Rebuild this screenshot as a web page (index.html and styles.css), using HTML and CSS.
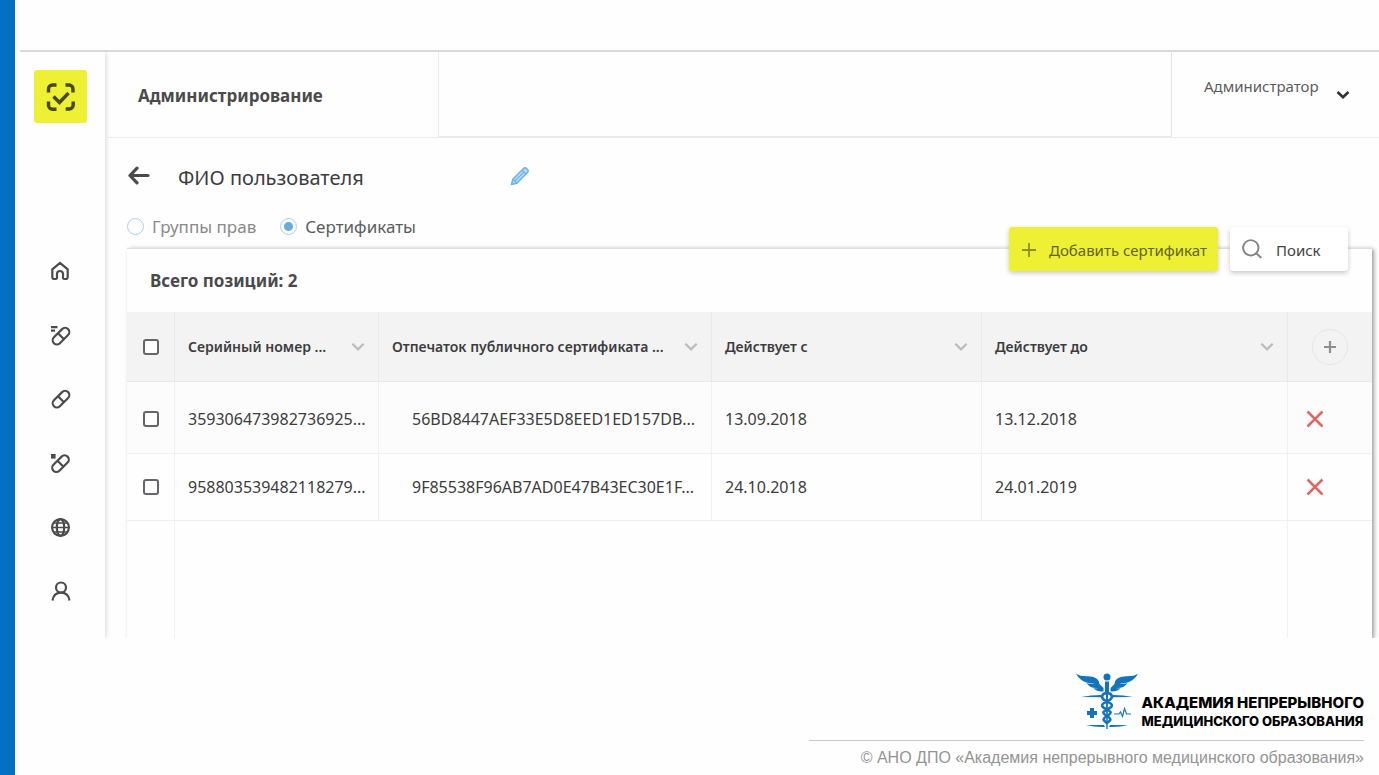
FILE: index.html
```html
<!DOCTYPE html>
<html lang="ru">
<head>
<meta charset="utf-8">
<meta name="viewport" content="width=device-width, initial-scale=1">
<title>Администрирование</title>
<link rel="stylesheet" href="styles.css">
</head>
<body>
<div class="slide">
  <div class="slide-accent"></div>
  <div class="slide-body">
    <div class="app">
      <nav class="sidebar" aria-label="Разделы">
        <a class="brand" href="#" aria-label="На главную">
          <svg width="32" height="32" viewBox="0 0 32 32" fill="none" stroke="#46481f" stroke-width="3.4">
            <path d="M3.500 11.500V8a4 4 0 0 1 4-4H11.500M20.500 4h3.500a4 4 0 0 1 4 4V11.500M28.200 20.500V24a4 4 0 0 1-4 4h-3.500M11.500 28.200H7.500a4 4 0 0 1-4-4V20.500"/>
            <path d="M8.500 15.500l6 6L23.500 12"/>
          </svg>
        </a>
        <ul class="menu">
          <li><a href="#" aria-label="Главная"><svg class="icon" viewBox="0 0 20 20"><path d="M2.300 8.300L10 2l7.700 6.300V16q0 2-2 2h-1.500q-1.200 0-1.200-1.200V13a3 3 0 0 0-6 0v3.800Q7 18 5.800 18H4.300q-2 0-2-2z"/></svg></a></li>
          <li><a href="#" aria-label="Назначения"><svg class="icon" viewBox="0 0 20 20"><rect x="1" y="7" width="20" height="8.400" rx="4.200" transform="rotate(-45 11 11.200)"/><path d="M8 8.300l6 6M1 2.200h6.500M1 5.600h4"/></svg></a></li>
          <li><a href="#" aria-label="Препараты"><svg class="icon" viewBox="0 0 20 20"><rect x="1" y="6" width="20" height="8.400" rx="4.200" transform="rotate(-45 11 10.200)"/><path d="M8 7.300l6 6"/></svg></a></li>
          <li><a href="#" aria-label="Остатки"><svg class="icon" viewBox="0 0 20 20"><rect x="0.500" y="6.500" width="20" height="8.400" rx="4.200" transform="rotate(-45 10.500 10.700)"/><path d="M7.500 7.800l6 6"/><path class="solid" d="M1 1h4.600v4.600H1z"/></svg></a></li>
          <li><a href="#" aria-label="Сеть"><svg class="icon" viewBox="0 0 20 20"><circle cx="10.500" cy="10.500" r="8.400"/><ellipse cx="10.500" cy="10.500" rx="3.700" ry="8.400"/><path d="M2 10.500h17M4 6h13M4 15h13" stroke-width="1.300"/></svg></a></li>
          <li><a href="#" aria-label="Профиль"><svg class="icon" viewBox="0 0 20 20"><circle cx="11" cy="6.500" r="5"/><path d="M2.500 19.500c.7-5 3.800-7.800 8.500-7.800s7.800 2.800 8.500 7.800"/></svg></a></li>
        </ul>
      </nav>

      <main class="main">
        <header class="topbar">
          <h1 class="topbar-title">Администрирование</h1>
          <div class="topbar-space"></div>
          <button class="account" type="button">
            <span>Администратор</span>
            <svg width="14" height="10" viewBox="0 0 14 10" fill="none" stroke="#333" stroke-width="2.600"><path d="M1.500 2L7 7.200 12.500 2"/></svg>
          </button>
        </header>

        <div class="heading">
          <button class="plain" type="button" aria-label="Назад">
            <svg width="24" height="20" viewBox="0 0 24 20" fill="none" stroke="#4a4a4e" stroke-width="3.200" stroke-linecap="round" stroke-linejoin="round"><path d="M21 9.500H3M10 2.200L3 9.500l7 7.300"/></svg>
          </button>
          <h2 class="heading-name">ФИО пользователя</h2>
          <button class="plain" type="button" aria-label="Изменить">
            <svg width="20" height="20" viewBox="0 0 20 20"><path d="M1.500 18.500l1.300-5.300L13.500 2.500q1.500-1.500 3 0l1 1q1.500 1.500 0 3L6.800 17.200z" fill="#b9dcf5" stroke="#6fb0e2" stroke-width="1.500" stroke-linejoin="round"/><path d="M12 4l4 4M3 13.300l3.700 3.700M5 14.900L14 5.900" stroke="#6fb0e2" stroke-width="1.200"/></svg>
          </button>
        </div>

        <div class="tabs">
          <label class="tab"><input type="radio" name="view">Группы прав</label>
          <label class="tab tab-active"><input type="radio" name="view" checked>Сертификаты</label>
        </div>

        <section class="panel">
          <div class="actions">
            <button class="add" type="button">
              <svg width="16" height="16" viewBox="0 0 16 16" stroke="#8d9026" stroke-width="1.800"><path d="M8 1v14M1 8h14"/></svg>
              Добавить сертификат
            </button>
            <label class="search">
              <svg width="20" height="20" viewBox="0 0 20 20" fill="none" stroke="#858585" stroke-width="1.900"><circle cx="8.800" cy="8.800" r="7.700"/><path d="M14.300 14.300L19.300 19"/></svg>
              <input type="text" placeholder="Поиск" aria-label="Поиск">
            </label>
          </div>

          <p class="total">Всего позиций: 2</p>

          <table class="grid">
            <colgroup><col class="col-check"><col class="col-serial"><col class="col-print"><col class="col-from"><col><col class="col-tools"></colgroup>
            <thead>
              <tr>
                <th><input type="checkbox" aria-label="Выбрать все"></th>
                <th><div class="th">Серийный номер ...<button class="plain" type="button" aria-label="Сортировать по номеру"><svg class="chevron" viewBox="0 0 12 8"><path d="M1 1.500l5 5 5-5"/></svg></button></div></th>
                <th><div class="th">Отпечаток публичного сертификата ...<button class="plain" type="button" aria-label="Сортировать по отпечатку"><svg class="chevron" viewBox="0 0 12 8"><path d="M1 1.500l5 5 5-5"/></svg></button></div></th>
                <th><div class="th">Действует с<button class="plain" type="button" aria-label="Сортировать по дате начала"><svg class="chevron" viewBox="0 0 12 8"><path d="M1 1.500l5 5 5-5"/></svg></button></div></th>
                <th><div class="th">Действует до<button class="plain" type="button" aria-label="Сортировать по дате окончания"><svg class="chevron" viewBox="0 0 12 8"><path d="M1 1.500l5 5 5-5"/></svg></button></div></th>
                <th><button class="add-column" type="button" aria-label="Добавить столбец"><svg width="14" height="14" viewBox="0 0 14 14" stroke="#8e8e8e" stroke-width="2.200"><path d="M7 1v12M1 7h12"/></svg></button></th>
              </tr>
            </thead>
            <tbody>
              <tr class="odd">
                <td><input type="checkbox" aria-label="Выбрать сертификат 1"></td>
                <td>359306473982736925...</td>
                <td class="print">56BD8447AEF33E5D8EED1ED157DB...</td>
                <td>13.09.2018</td>
                <td>13.12.2018</td>
                <td class="tools"><button class="plain" type="button" aria-label="Удалить"><svg class="cross" viewBox="0 0 18 18"><path d="M1.500 1.500l15 15M16.500 1.500l-15 15"/></svg></button></td>
              </tr>
              <tr>
                <td><input type="checkbox" aria-label="Выбрать сертификат 2"></td>
                <td>958803539482118279...</td>
                <td class="print">9F85538F96AB7AD0E47B43EC30E1F...</td>
                <td>24.10.2018</td>
                <td>24.01.2019</td>
                <td class="tools"><button class="plain" type="button" aria-label="Удалить"><svg class="cross" viewBox="0 0 18 18"><path d="M1.500 1.500l15 15M16.500 1.500l-15 15"/></svg></button></td>
              </tr>
            </tbody>
          </table>
          <div class="grid-rest"></div>
        </section>
      </main>
    </div>

    <footer class="footer">
      <div class="academy">
        <svg width="64" height="58" viewBox="0 0 64 58" fill="#1474bb">
          <circle cx="32" cy="5" r="3.500"/>
          <path d="M30 9.500h4v11h-4z"/>
          <path d="M1 1.500c4 3 9 2.500 14 3 6 .6 9 3 9.500 7.500l4 4v3.500c-5 .5-8-1-10-3.500 1.500.3 3 .3 4.500 0-5.500.5-9.500-1.500-11.500-5 2.500 1 5 1.200 8 .8C11 11.500 4.500 8.500 1 1.500z"/>
          <path d="M63 1.500c-4 3-9 2.500-14 3-6 .6-9 3-9.500 7.500l-4 4v3.500c5 .5 8-1 10-3.500-1.500.3-3 .3-4.500 0 5.500.5 9.500-1.500 11.500-5-2.500 1-5 1.200-8 .8C53 11.500 59.500 8.500 63 1.500z"/>
          <path d="M6 25q10-2 20-2l1 2.300zM58 25q-10-2-20-2l-1 2.300zM11 53h18l1 2q-10 .5-19-2zM53 53H35l-1 2q10 .5 19-2z"/>
          <path d="M31 22h2l-.3 35h-1.400z"/>
          <path d="M28 22c9-3 12 4 5 7s-8 5-2 8 6 4 1 7-4 4 0 7M36 22c-9-3-12 4-5 7s8 5 2 8-6 4-1 7 4 4 0 7" fill="none" stroke="#1474bb" stroke-width="2.600"/>
          <path d="M15 36h4v3h3v4h-3v3h-4v-3h-3v-4h3z"/>
          <path d="M39 42h5l1.500-2 2 4.500 2-8 2 5.500H56" fill="none" stroke="#1474bb" stroke-width="1.200"/>
        </svg>
        <div class="academy-name">
          <span>АКАДЕМИЯ НЕПРЕРЫВНОГО</span>
          <span class="academy-small">МЕДИЦИНСКОГО ОБРАЗОВАНИЯ</span>
        </div>
      </div>
      <p class="copyright">© АНО ДПО «Академия непрерывного медицинского образования»</p>
    </footer>
  </div>
</div>
</body>
</html>
```
FILE: styles.css
```css
* {
  box-sizing: border-box;
}

body {
  margin: 0;
  background: #fefefe;
  color: #3c3c3e;
  font-family: "Noto Sans", "Open Sans", sans-serif;
  font-size: 16px;
}

h1, h2, p, ul {
  margin: 0;
  padding: 0;
}

button, input {
  font: inherit;
  color: inherit;
}

svg {
  display: block;
  flex: none;
}

.slide {
  display: flex;
  min-height: 100vh;
}

.slide-accent {
  flex: none;
  width: 15px;
  background: #0070c0;
}

.slide-body {
  flex: 1;
  min-width: 0;
  display: flex;
  flex-direction: column;
  padding-top: 50px;
}

.app {
  flex: 1;
  display: flex;
  margin-left: 5px;
  border-top: 2px solid #d9d9d9;
  overflow: hidden;
}

.sidebar {
  flex: none;
  width: 85px;
  padding: 18px 0 0 14px;
  box-shadow: 1px 0 5px rgba(0, 0, 0, 0.16);
}

.brand {
  display: grid;
  place-items: center;
  width: 53px;
  height: 53px;
  border-radius: 3px;
  background: #eef034;
}

.menu {
  display: flex;
  flex-direction: column;
  gap: 44px;
  margin-top: 138px;
  padding-left: 16px;
  list-style: none;
}

.menu a {
  display: block;
}

.icon {
  width: 20px;
  height: 20px;
  fill: none;
  stroke: #4c4c4e;
  stroke-width: 2.2;
  overflow: visible;
}

.icon .solid {
  fill: #4c4c4e;
  stroke: none;
}

.main {
  flex: 1;
  min-width: 0;
  display: flex;
  flex-direction: column;
}

.topbar {
  display: flex;
  height: 86px;
  border-bottom: 1px solid #ebebeb;
}

.topbar-title {
  width: 334px;
  padding-left: 33px;
  border-right: 1px solid #ebebeb;
  color: #4a4a4c;
  font-size: 17px;
  font-weight: 700;
  line-height: 88px;
}

.topbar-space {
  flex: 1;
  border-bottom: 1px solid #e8e8e8;
}

.account {
  display: flex;
  align-items: center;
  gap: 17px;
  width: 208px;
  padding: 0 0 18px 32px;
  border: 0;
  border-left: 1px solid #e4e4e4;
  background: none;
  color: #5c5c5e;
  font-size: 15px;
}

.account svg {
  margin-top: 18px;
}

.plain {
  display: block;
  padding: 0;
  border: 0;
  background: none;
}

.heading {
  display: flex;
  align-items: center;
  height: 76px;
  padding-left: 22px;
}

.heading-name {
  width: 332px;
  margin-left: 27px;
  padding-top: 3px;
  font-size: 20px;
  font-weight: 400;
}

.tabs {
  display: flex;
  gap: 24px;
  height: 34px;
  padding-left: 22px;
}

.tab {
  display: flex;
  align-items: center;
  gap: 8px;
  height: 24px;
  color: #8a8a8a;
  font-size: 17px;
}

.tab-active {
  color: #5c5c5e;
}

.tab input {
  appearance: none;
  width: 17px;
  height: 17px;
  margin: 0;
  border: 1px solid #a9d1f0;
  border-radius: 50%;
}

.tab input:checked {
  background: radial-gradient(circle, #6aabdf 4px, transparent 5px);
}

.panel {
  position: relative;
  flex: 1;
  display: flex;
  flex-direction: column;
  margin: 0 7px 0 22px;
  border-top: 1px solid #e0e0e0;
  box-shadow: 2px 1px 4px rgba(0, 0, 0, 0.38);
}

.actions {
  position: absolute;
  top: -22px;
  right: 24px;
  display: flex;
  gap: 12px;
}

.add, .search {
  display: flex;
  align-items: center;
  height: 44px;
  border: 0;
  border-radius: 3px;
  box-shadow: 0 2px 5px rgba(0, 0, 0, 0.22);
}

.add {
  gap: 12px;
  width: 209px;
  padding: 2px 0 0 12px;
  background: #eef034;
  color: #62641f;
  font-size: 15px;
  white-space: nowrap;
}

.search {
  gap: 14px;
  width: 118px;
  padding-left: 12px;
  background: #fff;
  font-size: 15px;
}

.search input {
  width: 60px;
  padding: 2px 0 0;
  border: 0;
  background: none;
}

.search input::placeholder {
  color: #444;
  opacity: 1;
}

.total {
  padding-left: 23px;
  height: 63px;
  color: #4a4a4c;
  font-size: 17px;
  font-weight: 700;
  line-height: 64px;
}

.grid {
  width: 100%;
  table-layout: fixed;
  border-collapse: separate;
  border-spacing: 0;
}

.col-check { width: 48px; }
.col-serial { width: 204px; }
.col-print { width: 333px; }
.col-from { width: 270px; }
.col-tools { width: 84px; }

.grid th, .grid td {
  padding: 0 13px;
  border-right: 1px solid #f0f0f0;
  border-bottom: 1px solid #f0f0f0;
  text-align: left;
  white-space: nowrap;
}

.grid th:last-child, .grid td:last-child {
  border-right: 0;
}

.grid th {
  height: 70px;
  background: #f3f3f3;
  border-color: #e9e9e9;
  font-size: 14px;
  font-weight: 600;
}

.grid td {
  height: 67px;
  font-size: 16px;
}

.grid .odd td {
  height: 72px;
  padding-top: 2px;
  background: #fcfcfc;
}

.grid tr > :first-child {
  padding-left: 16px;
}

.grid .print {
  padding-left: 33px;
}

.grid .tools {
  padding-left: 18px;
}

.grid input {
  appearance: none;
  display: block;
  width: 16px;
  height: 16px;
  margin: 0;
  border: 2px solid #66666a;
  border-radius: 3px;
  background: #fff;
}

.th {
  display: flex;
  align-items: center;
  justify-content: space-between;
}

.chevron {
  width: 14px;
  height: 9px;
  fill: none;
  stroke: #bcbcbc;
  stroke-width: 2;
}

.cross {
  width: 18px;
  height: 18px;
  fill: none;
  stroke: #dc6a63;
  stroke-width: 2.5;
}

.add-column {
  display: grid;
  place-items: center;
  width: 36px;
  height: 36px;
  margin-left: 11px;
  padding: 0;
  border: 1px solid #e6e6e6;
  border-radius: 50%;
  background: none;
}

.grid-rest {
  flex: 1;
  margin: 0 84px 0 47px;
  border: solid #f2f2f2;
  border-width: 0 1px;
}

.footer {
  display: flex;
  flex-direction: column;
  align-items: flex-end;
  height: 137px;
  padding: 34px 15px 0 0;
}

.academy {
  display: flex;
  gap: 3px;
  width: 555px;
  max-width: 100%;
  height: 69px;
  justify-content: flex-end;
  border-bottom: 1px solid #c9c9c9;
}

.academy-name {
  display: flex;
  flex-direction: column;
  padding-top: 22px;
  color: #000;
  font-family: Inter, "Open Sans", sans-serif;
  font-size: 15px;
  font-weight: 800;
  line-height: 18px;
}

.academy-small {
  font-size: 13px;
}

.copyright {
  padding-top: 7px;
  color: #949494;
  font-family: "Liberation Sans", Arial, sans-serif;
  font-size: 16px;
  line-height: 20px;
}
```
